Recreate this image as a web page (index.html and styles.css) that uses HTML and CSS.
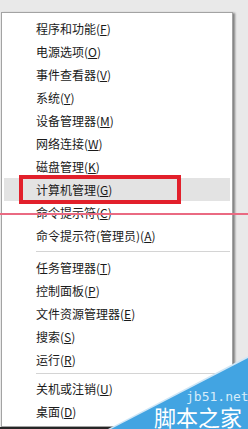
FILE: index.html
```html
<!DOCTYPE html>
<html lang="zh-CN">
<head>
    <meta charset="UTF-8">
    <meta name="viewport" content="width=device-width, initial-scale=1.0">
    <title>Win+X 菜单</title>
    <link rel="stylesheet" href="styles.css">
</head>
<body>
    <div class="screen">
        <ul class="menu">
            <li class="item">程序和功能(<u>F</u>)</li>
            <li class="item">电源选项(<u>O</u>)</li>
            <li class="item">事件查看器(<u>V</u>)</li>
            <li class="item">系统(<u>Y</u>)</li>
            <li class="item">设备管理器(<u>M</u>)</li>
            <li class="item">网络连接(<u>W</u>)</li>
            <li class="item">磁盘管理(<u>K</u>)</li>
            <li class="item active">计算机管理(<u>G</u>)<span class="mark"></span></li>
            <li class="item">命令提示符(<u>C</u>)</li>
            <li class="item">命令提示符(管理员)(<u>A</u>)</li>
            <li class="sep"></li>
            <li class="item">任务管理器(<u>T</u>)</li>
            <li class="item">控制面板(<u>P</u>)</li>
            <li class="item">文件资源管理器(<u>E</u>)</li>
            <li class="item">搜索(<u>S</u>)</li>
            <li class="item">运行(<u>R</u>)</li>
            <li class="sep sep-short"></li>
            <li class="item">关机或注销(<u>U</u>)</li>
            <li class="item">桌面(<u>D</u>)</li>
        </ul>
        <div class="taskbar"></div>

        <!-- annotation line across the menu -->
        <div class="guide"></div>

        <!-- site watermark -->
        <div class="stamp-edge"></div>
        <div class="stamp">
            <span class="stamp-url">jb51.net</span>
            <span class="stamp-name">脚本之家</span>
        </div>
    </div>
</body>
</html>
```

FILE: styles.css
```css
body {
    margin: 0;
    background-color: #e9e9e9;
    font-family: "Noto Sans CJK SC", "Noto Sans", sans-serif;
}
.screen {
    position: relative;
    width: 248px;
    height: 429px;
    overflow: hidden;
}
.menu {
    list-style: none;
    box-sizing: border-box;
    width: 232px;
    height: 415px;
    margin: 12px 0 0 1px;
    padding: 4px 2px 3px;
    background-color: #fff;
    border: 1px solid #a3a3a3;
    box-shadow: 2px 1px 2px rgba(0, 0, 0, 0.45);
}
.item {
    position: relative;
    height: 23px;
    line-height: 23px;
    padding-left: 32px;
    font-size: 12px;
    color: #1a1a1a;
    white-space: nowrap;
}
.item u {
    text-underline-offset: 1px;
}
.active {
    background-color: #e3e3e3;
}
.mark {
    position: absolute;
    left: 15px;
    top: -3px;
    box-sizing: border-box;
    width: 162px;
    height: 29px;
    border: 4px solid #e2202b;
}
.sep {
    height: 9px;
    margin-left: 32px;
    position: relative;
}
.sep::after {
    content: "";
    position: absolute;
    left: 0;
    right: 0;
    top: 4px;
    height: 1px;
    background-color: #d4d4d4;
}
.sep-short {
    height: 6px;
}
.sep-short::after {
    top: 2px;
}
.taskbar {
    height: 2px;
    background-color: #262626;
}
.guide {
    position: absolute;
    left: 0;
    right: 0;
    top: 213px;
    height: 2px;
    background-color: #ea6a82;
}
.stamp-edge {
    position: absolute;
    inset: 0;
    background-color: #cfe6f6;
    clip-path: polygon(108px 429px, 248px 356px, 248px 429px);
}
.stamp {
    position: absolute;
    inset: 0;
    background-color: #42a4e2;
    clip-path: polygon(111px 429px, 248px 358px, 248px 429px);
}
.stamp-url {
    position: absolute;
    left: 186px;
    top: 390px;
    font-family: "DejaVu Sans Mono", monospace;
    font-size: 13px;
    line-height: 13px;
    color: #d6ecfa;
}
.stamp-name {
    position: absolute;
    left: 154px;
    top: 404px;
    font-size: 22px;
    line-height: 24px;
    color: #fff;
    white-space: nowrap;
}
```
